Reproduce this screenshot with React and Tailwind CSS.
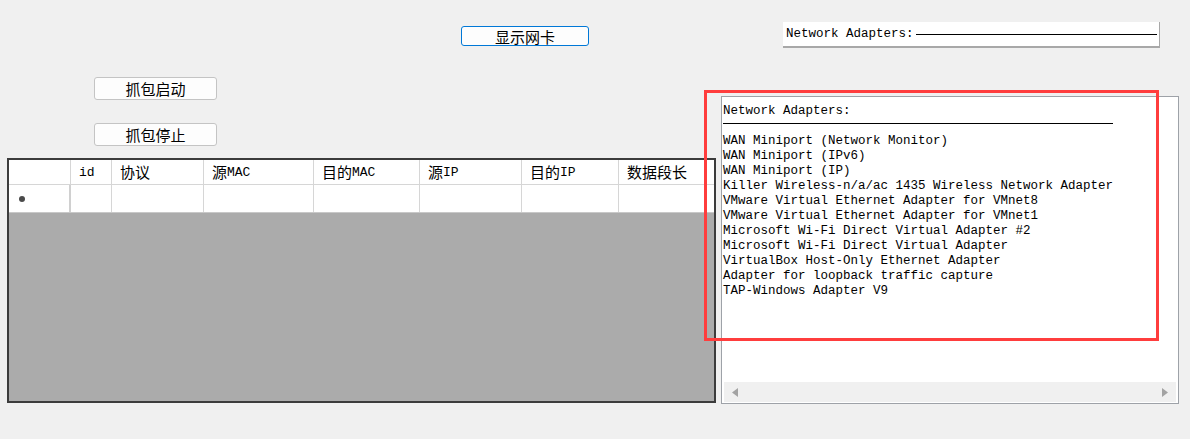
import React from "react";

const mono = { fontFamily: '"Liberation Mono", "Noto Sans CJK SC", monospace' };
const cjk = { fontFamily: '"Noto Sans CJK SC", "Liberation Sans", sans-serif' };

const lines = [
  "WAN Miniport (Network Monitor)",
  "WAN Miniport (IPv6)",
  "WAN Miniport (IP)",
  "Killer Wireless-n/a/ac 1435 Wireless Network Adapter",
  "VMware Virtual Ethernet Adapter for VMnet8",
  "VMware Virtual Ethernet Adapter for VMnet1",
  "Microsoft Wi-Fi Direct Virtual Adapter #2",
  "Microsoft Wi-Fi Direct Virtual Adapter",
  "VirtualBox Host-Only Ethernet Adapter",
  "Adapter for loopback traffic capture",
  "TAP-Windows Adapter V9",
];

const cols = [
  { w: 41, parts: [["id", "l"]] },
  { w: 92, parts: [["协议", "c"]] },
  { w: 110, parts: [["源", "c"], ["MAC", "l"]] },
  { w: 106, parts: [["目的", "c"], ["MAC", "l"]] },
  { w: 102, parts: [["源", "c"], ["IP", "l"]] },
  { w: 97, parts: [["目的", "c"], ["IP", "l"]] },
  { w: 96, parts: [["数据段长", "c"]] },
];

function HeaderText({ parts }) {
  return (
    <span className="flex items-center h-[18px] text-black">
      {parts.map(([t, k], i) =>
        k === "c" ? (
          <span key={i} className="text-[15px] leading-[18px]" style={cjk}>{t}</span>
        ) : (
          <span key={i} className="text-[13px] leading-[18px] mt-[1px]" style={mono}>{t}</span>
        )
      )}
    </span>
  );
}

export default function App() {
  return (
    <div className="relative w-[1190px] h-[439px] bg-[#f0f0f0] overflow-hidden">
      {/* top row */}
      <div className="flex items-start h-[50px]">
        <button
          className="ml-[461px] mt-[26px] w-[128px] h-[20px] rounded-[3px] border border-[#0078d7] bg-[#fdfdfd] flex items-center justify-center text-[15px] text-black leading-none"
          style={cjk}
        >
          显示网卡
        </button>
        <div className="ml-[194px] mt-[22px] w-[377px] h-[26px] bg-white border-b-2 border-r border-[#a8a8a8] flex items-center pl-[3px] pr-[2px]">
          <span className="text-[12.5px] leading-none text-black whitespace-pre" style={mono}>Network Adapters:</span>
          <div className="flex-1 h-[1px] bg-black ml-[2px]" />
        </div>
      </div>

      {/* main row */}
      <div className="flex items-start">
        {/* left */}
        <div className="w-[716px] pl-[7px] flex flex-col">
          <button
            className="ml-[87px] mt-[27px] w-[123px] h-[23px] rounded-[3px] border border-[#c4c4c4] bg-[#fdfdfd] flex items-center justify-center text-[15px] text-black leading-none"
            style={cjk}
          >
            抓包启动
          </button>
          <button
            className="ml-[87px] mt-[23px] w-[123px] h-[23px] rounded-[3px] border border-[#c4c4c4] bg-[#fdfdfd] flex items-center justify-center text-[15px] text-black leading-none"
            style={cjk}
          >
            抓包停止
          </button>
          {/* grid */}
          <div className="mt-[12px] w-[709px] h-[245px] border-2 border-[#3c3c3c] bg-[#ababab] flex flex-col overflow-hidden">
            <div className="flex h-[25px] bg-white border-b border-[#d6d6d6]">
              <div className="w-[62px] shrink-0 border-r border-[#d6d6d6]" />
              {cols.map((c, i) => (
                <div
                  key={i}
                  className="shrink-0 border-r border-[#d6d6d6] flex items-center pl-[8px]"
                  style={{ width: c.w }}
                >
                  <HeaderText parts={c.parts} />
                </div>
              ))}
            </div>
            <div className="flex h-[28px] bg-white border-b border-[#c8c8c8]">
              <div className="w-[62px] shrink-0 border-r-2 border-[#d0d0d0] flex items-center pl-[10px]">
                <div className="w-[6px] h-[6px] rounded-full bg-[#4a4a4a]" />
              </div>
              {cols.map((c, i) => (
                <div
                  key={i}
                  className="shrink-0 border-r border-[#d6d6d6]"
                  style={{ width: c.w }}
                />
              ))}
            </div>
          </div>
        </div>

        {/* right textbox */}
        <div className="ml-[5px] mt-[46px] w-[458px] h-[308px] bg-white border border-[#9ea2a8] flex flex-col">
          <div className="flex-1 pl-[1px] pt-[7px] text-[12.5px] leading-[15px] text-black whitespace-pre" style={mono}>
            <div>Network Adapters:</div>
            <div className="h-[15px] flex items-start">
              <div className="w-[390px] h-[1px] bg-black mt-[4px]" />
            </div>
            {lines.map((l, i) => (
              <div key={i}>{l}</div>
            ))}
          </div>
          <div className="mx-[2px] mb-[1px] h-[20px] bg-[#f0f0f0] flex items-center justify-between px-[8px]">
            <svg width="6" height="9" viewBox="0 0 6 9">
              <path d="M6 0 L0 4.5 L6 9 Z" fill="#a3a3a3" />
            </svg>
            <svg width="6" height="9" viewBox="0 0 6 9">
              <path d="M0 0 L6 4.5 L0 9 Z" fill="#a3a3a3" />
            </svg>
          </div>
        </div>
      </div>

      {/* red annotation overlay */}
      <div className="absolute left-[704px] top-[90px] w-[455px] h-[251px] border-[3px] border-[#ff3d3d] pointer-events-none" />
    </div>
  );
}
